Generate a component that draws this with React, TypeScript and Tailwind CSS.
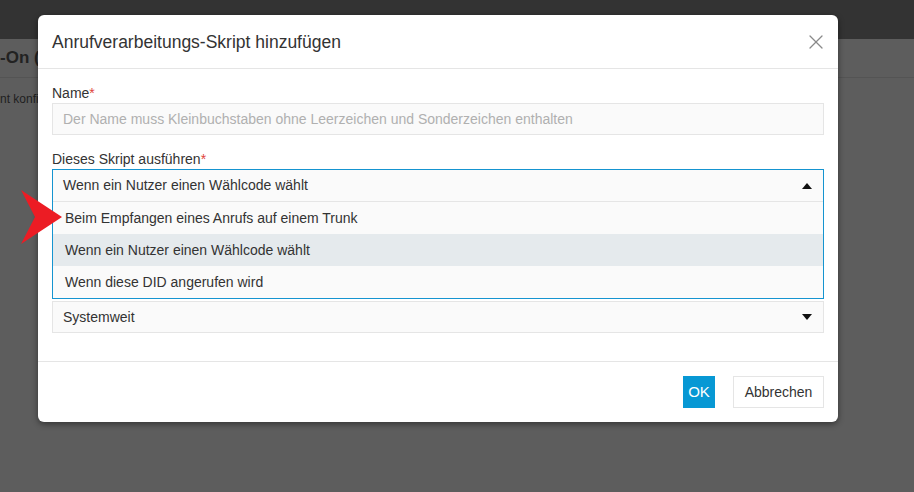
import { X } from "lucide-react";

const options = [
    "Beim Empfangen eines Anrufs auf einem Trunk",
    "Wenn ein Nutzer einen Wählcode wählt",
    "Wenn diese DID angerufen wird",
];

function Caret({ up }: { up?: boolean }) {
    return (
        <svg width="10" height="6" viewBox="0 0 10 6" className="shrink-0">
            {up ? <polygon points="0,6 10,6 5,0" fill="#111" /> : <polygon points="0,0 10,0 5,6" fill="#111" />}
        </svg>
    );
}

export default function App() {
    const highlighted = 1;

    return (
        <div className="relative h-[492px] w-full overflow-hidden bg-[#5d5d5d] font-['Liberation_Sans',Arial,sans-serif]">
            {/* page behind the overlay */}
            <div className="h-[39px] bg-[#333333]" />
            <div className="h-[39px] border-b border-[#545454] pt-[7px] text-[17px] font-bold leading-[24px] text-[#222]">
                -On (
            </div>
            <div className="w-[38px] overflow-hidden whitespace-nowrap pt-[13px] text-[12px] leading-[16px] text-[#1f1f1f]">nt konfi</div>

            {/* modal */}
            <div className="absolute left-[38px] top-[15px] w-[800px] rounded-md bg-white shadow-[0_2px_6px_rgba(0,0,0,0.45)]">
                <div className="flex h-[54px] items-center justify-between border-b border-[#e5e5e5] pl-[14px] pr-[10px]">
                    <h2 className="text-[17.5px] leading-[24px] text-[#333]">Anrufverarbeitungs-Skript hinzufügen</h2>
                    <X size={24} strokeWidth={1.3} className="text-[#8a8a8a]" />
                </div>

                <div className="px-[14px] pb-[28px] pt-[14px]">
                    <label className="block text-[14px] leading-[20px] text-[#333]">
                        Name<span className="text-[#e0443c]">*</span>
                    </label>
                    <div className="flex h-[32px] items-center border border-[#e5e5e5] bg-[#fafafa] px-[10px] text-[14px] text-[#b0b0b0]">
                        Der Name muss Kleinbuchstaben ohne Leerzeichen und Sonderzeichen enthalten
                    </div>

                    <label className="mt-[14px] block text-[14px] leading-[20px] text-[#333]">
                        Dieses Skript ausführen<span className="text-[#e0443c]">*</span>
                    </label>
                    <div className="border border-[#1594d0] bg-[#fafafa]">
                        <div className="flex h-[32px] items-center justify-between border-b border-[#e5e5e5] pl-[10px] pr-[11px] text-[14px] text-[#333]">
                            <span>Wenn ein Nutzer einen Wählcode wählt</span>
                            <Caret up />
                        </div>
                        {options.map((o, i) => (
                            <div
                                key={o}
                                className={`flex h-[32px] items-center pl-[12px] text-[14px] text-[#333] ${i === highlighted ? "bg-[#e5eaed]" : ""}`}
                            >
                                {o}
                            </div>
                        ))}
                    </div>

                    <div className="mt-[2px] flex h-[32px] items-center justify-between border border-[#e5e5e5] bg-[#fafafa] pl-[10px] pr-[11px] text-[14px] text-[#333]">
                        <span>Systemweit</span>
                        <Caret />
                    </div>
                </div>

                <div className="flex justify-end gap-[18px] border-t border-[#e5e5e5] px-[14px] py-[14px]">
                    <button className="h-[32px] w-[32px] bg-[#0798d4] text-[15px] text-white">OK</button>
                    <button className="h-[32px] w-[91px] border border-[#e5e5e5] bg-white text-[14px] text-[#333]">Abbrechen</button>
                </div>
            </div>

            {/* red pointer arrow */}
            <svg className="absolute left-[19px] top-[188px]" width="46" height="58" viewBox="0 0 46 58">
                <polygon points="2,2 43,29 2,56 16,29" fill="#ec1c24" />
            </svg>
        </div>
    );
}
